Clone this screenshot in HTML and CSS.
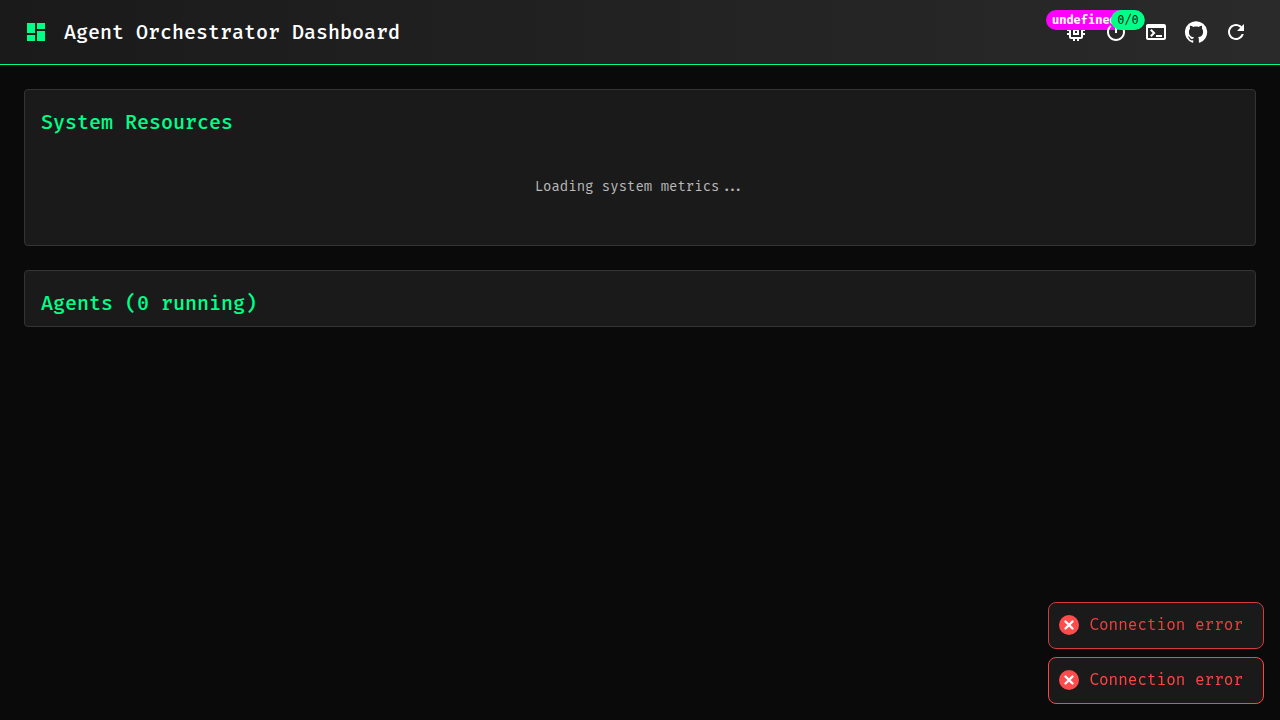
FILE: index.html
```html
<!DOCTYPE html>
<html lang="en">
<head>
<meta charset="utf-8">
<meta name="viewport" content="width=device-width, initial-scale=1">
<title>Agent Orchestrator Dashboard</title>
<link rel="stylesheet" href="styles.css">
</head>
<body>
<header class="app-bar">
  <svg class="icon logo" viewBox="0 0 24 24" aria-hidden="true"><path d="M3 13h8V3H3v10zm0 8h8v-6H3v6zm10 0h8V11h-8v10zm0-18v6h8V3h-8z"/></svg>
  <h1 class="title">Agent Orchestrator Dashboard</h1>
  <nav class="actions">
    <button class="icon-button" type="button" aria-label="System usage">
      <span class="badge-anchor">
        <svg class="icon" viewBox="0 0 24 24" aria-hidden="true"><path d="M15 9H9v6h6V9zm-2 4h-2v-2h2v2zm8-2V9h-2V7c0-1.100-.9-2-2-2h-2V3h-2v2h-2V3H9v2H7c-1.100 0-2 .9-2 2v2H3v2h2v2H3v2h2v2c0 1.100.9 2 2 2h2v2h2v-2h2v2h2v-2h2c1.100 0 2-.9 2-2v-2h2v-2h-2v-2h2zm-4 6H7V7h10v10z"/></svg>
        <span class="badge badge-usage">undefined</span>
      </span>
    </button>
    <button class="icon-button" type="button" aria-label="Running agents">
      <span class="badge-anchor">
        <svg class="icon" viewBox="0 0 24 24" aria-hidden="true"><path d="M13 3h-2v10h2V3zm4.830 2.170l-1.420 1.420C17.990 7.860 19 9.810 19 12c0 3.870-3.130 7-7 7s-7-3.130-7-7c0-2.190 1.010-4.140 2.580-5.420L6.170 5.170C4.230 6.820 3 9.260 3 12c0 4.970 4.030 9 9 9s9-4.030 9-9c0-2.740-1.230-5.180-3.170-6.830z"/></svg>
        <span class="badge badge-count">0/0</span>
      </span>
    </button>
    <button class="icon-button" type="button" aria-label="Terminal">
      <svg class="icon" viewBox="0 0 24 24" aria-hidden="true"><path d="M20 4H4c-1.110 0-2 .9-2 2v12c0 1.100.89 2 2 2h16c1.100 0 2-.9 2-2V6c0-1.100-.89-2-2-2zm0 14H4V8h16v10zm-2-1h-6v-2h6v2zM7.500 17l-1.410-1.410L8.670 13l-2.590-2.590L7.500 9l4 4-4 4z"/></svg>
    </button>
    <button class="icon-button" type="button" aria-label="GitHub">
      <svg class="icon" viewBox="0 0 24 24" aria-hidden="true"><path d="M12 1.270a11 11 0 00-3.480 21.460c.55.090.73-.28.73-.55v-1.840c-3.030.64-3.670-1.460-3.670-1.460-.55-1.290-1.280-1.650-1.280-1.650-.92-.65.1-.65.1-.65 1.100 0 1.730 1.100 1.730 1.100.92 1.650 2.570 1.200 3.210.92a2 2 0 01.64-1.470c-2.470-.27-5.040-1.190-5.040-5.500 0-1.100.46-2.100 1.200-2.840a3.760 3.760 0 010-2.930s.91-.28 3.110 1.100c1.800-.49 3.700-.49 5.500 0 2.100-1.380 3.020-1.100 3.020-1.100a3.760 3.760 0 01.1 2.930c.83.740 1.200 1.740 1.200 2.940 0 4.210-2.570 5.130-5.040 5.400.45.370.82.920.82 2.020v3.030c0 .27.1.640.73.550A11 11 0 0012 1.270"/></svg>
    </button>
    <button class="icon-button" type="button" aria-label="Refresh">
      <svg class="icon" viewBox="0 0 24 24" aria-hidden="true"><path d="M17.650 6.350C16.200 4.900 14.210 4 12 4c-4.420 0-7.990 3.580-7.990 8s3.570 8 7.990 8c3.730 0 6.840-2.550 7.730-6h-2.080c-.82 2.330-3.040 4-5.650 4-3.310 0-6-2.690-6-6s2.690-6 6-6c1.660 0 3.140.69 4.220 1.780L13 11h7V4l-2.350 2.350z"/></svg>
    </button>
  </nav>
</header>
<main class="content">
  <section class="card">
    <h2 class="card-title">System Resources</h2>
    <p class="loading">Loading system metrics<span class="ellipsis">...</span></p>
  </section>
  <section class="card card-flush">
    <h2 class="card-title">Agents (0 running)</h2>
  </section>
</main>
<aside class="toasts">
  <div class="toast toast-entering" role="status">
    <svg class="toast-icon" viewBox="0 0 20 20" aria-hidden="true"><circle cx="10" cy="10" r="10"/><path d="M6.500 6.500l7 7M13.500 6.500l-7 7"/></svg>
    <span>Connection error</span>
  </div>
  <div class="toast" role="status">
    <svg class="toast-icon" viewBox="0 0 20 20" aria-hidden="true"><circle cx="10" cy="10" r="10"/><path d="M6.500 6.500l7 7M13.500 6.500l-7 7"/></svg>
    <span>Connection error</span>
  </div>
</aside>
</body>
</html>
```
FILE: styles.css
```css
* {
  box-sizing: border-box;
}

body {
  margin: 0;
  min-height: 100vh;
  background: #0a0a0a;
  color: #fff;
  font-family: "Fira Mono", "Liberation Mono", monospace;
}

.app-bar {
  display: flex;
  align-items: center;
  min-height: 65px;
  padding: 0 24px;
  border-bottom: 1px solid #00ff88;
  background: linear-gradient(90deg, #1a1a1a, #2a2a2a);
}

.icon {
  display: block;
  width: 24px;
  height: 24px;
  fill: currentColor;
}

.logo {
  margin-right: 16px;
  color: #00ff88;
}

.title {
  flex: 1;
  margin: 0;
  font-size: 20px;
  font-weight: 500;
  line-height: 32px;
}

.actions {
  display: flex;
}

.icon-button {
  padding: 8px;
  border: 0;
  background: none;
  color: inherit;
  font: inherit;
  cursor: pointer;
}

.badge-anchor {
  display: block;
  position: relative;
}

.badge {
  position: absolute;
  top: 0;
  right: 0;
  height: 20px;
  padding: 0 6px;
  border-radius: 10px;
  font-size: 12px;
  line-height: 20px;
  text-align: left;
  transform: translate(50%, -50%);
}

.badge-usage {
  min-width: 84px;
  background: #ff00ff;
  font-weight: 700;
}

.badge-count {
  background: #00ff88;
  color: #0a0a0a;
}

.content {
  display: flex;
  flex-direction: column;
  gap: 24px;
  padding: 24px;
}

.card {
  padding: 16px;
  border: 1px solid #333;
  border-radius: 4px;
  background: #1a1a1a;
}

.card-flush {
  padding-bottom: 0;
}

.card-title {
  margin: 0 0 7px;
  color: #00ff88;
  font-size: 20px;
  font-weight: 500;
  line-height: 32px;
}

.loading {
  margin: 0;
  padding: 32px;
  color: #bbb;
  font-size: 14px;
  line-height: 20px;
  text-align: center;
}

.ellipsis {
  font-family: "Fira Code", "Liberation Mono", monospace;
}

.toasts {
  position: fixed;
  right: 16px;
  bottom: 16px;
  display: flex;
  flex-direction: column;
  gap: 8px;
}

.toast {
  display: flex;
  align-items: center;
  gap: 10px;
  padding: 11px 20px 13px 10px;
  border: 1px solid #ff4444;
  border-radius: 8px;
  background: #1a1a1a;
  color: #ff4444;
  font-size: 16px;
  line-height: 21px;
}

.toast-entering {
  border-color: #d43b3b;
  color: #ec4040;
}

.toast-icon {
  width: 20px;
  height: 20px;
  fill: #ff4b4b;
}

.toast-icon path {
  fill: none;
  stroke: #fff;
  stroke-width: 2.400;
  stroke-linecap: round;
}
```
